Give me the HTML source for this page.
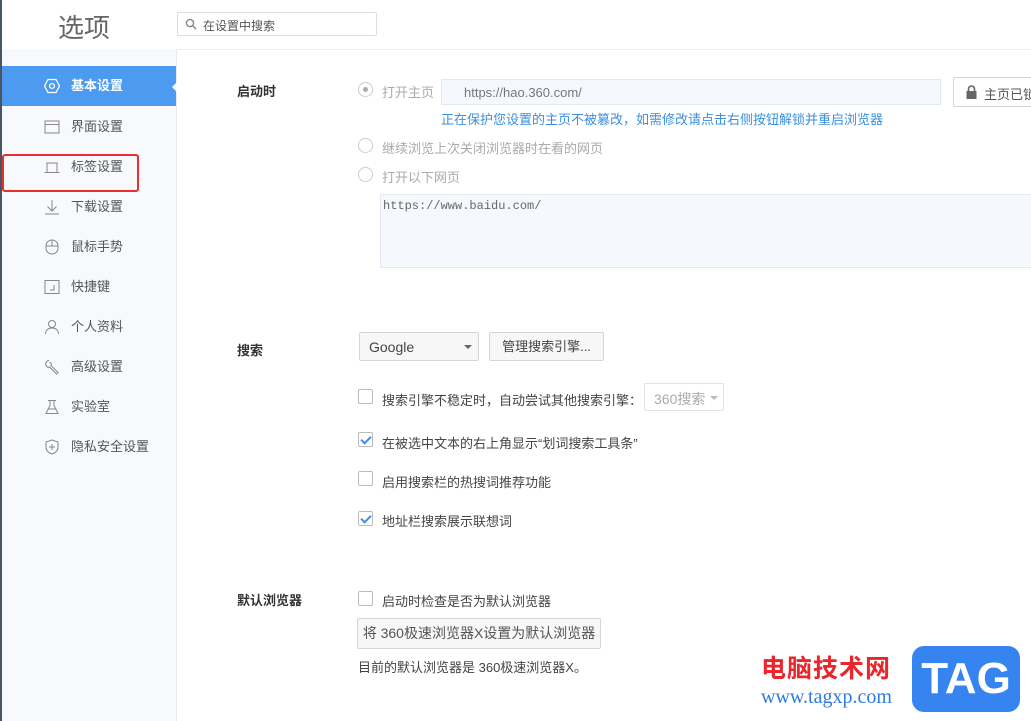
<!DOCTYPE html>
<html><head><meta charset="utf-8">
<style>
*{margin:0;padding:0;box-sizing:border-box}
body{width:1031px;height:721px;overflow:hidden;background:#fff;font-family:"Liberation Sans","Noto Sans CJK SC",sans-serif;font-size:13px;color:#444;position:relative}
.a{position:absolute}
.side{left:0;top:49px;width:177px;height:672px;background:#f7f9fc;border-right:1px solid #e6e9ee}
.item{position:absolute;left:0;width:176px;height:40px;line-height:40px;padding-left:71px;font-size:13px;color:#555}
.ic{position:absolute;left:44px;top:12px;width:16px;height:16px;color:#888;font-size:14px;line-height:16px;text-align:center}
.gray{color:#aaa}
.radio{position:absolute;width:15px;height:15px;border:1px solid #ccc;border-radius:50%;background:#fff}
.cb{position:absolute;width:15px;height:15px;border:1px solid #bbb;border-radius:2px;background:#fff}
.cb.on::after{content:"";position:absolute;left:4px;top:1px;width:4px;height:8px;border:solid #3b8ee8;border-width:0 2px 2px 0;transform:rotate(45deg)}
.btn{position:absolute;border:1px solid #d5d5d5;border-radius:2px;background:#f7f7f7;color:#444;text-align:center}
</style></head><body>
<div class="a" style="left:58px;top:8px;font-size:26px;color:#666">选项</div>
<div class="a" style="left:177px;top:12px;width:200px;height:24px;border:1px solid #ddd;border-radius:2px;background:#fff">
 <svg class="a" style="left:7px;top:5px" width="12" height="12" viewBox="0 0 12 12"><circle cx="5" cy="5" r="3.6" fill="none" stroke="#888" stroke-width="1.4"/><line x1="7.6" y1="7.6" x2="11" y2="11" stroke="#888" stroke-width="1.5"/></svg>
 <span class="a" style="left:25px;top:4px;font-size:12px;color:#555">在设置中搜索</span></div>
<div class="a" style="left:0;top:49px;width:1031px;height:1px;background:#eceef2"></div>
<div class="a side">
 <div class="item" style="top:17px;background:#4d9bf0;color:#fff;font-weight:bold"><span class="ic" style="color:#fff"><svg width="16" height="16" viewBox="0 0 16 16"><polygon points="4,1.5 12,1.5 15.5,8 12,14.5 4,14.5 0.5,8" fill="none" stroke="#fff" stroke-width="1.3"/><circle cx="8" cy="8" r="2.4" fill="none" stroke="#fff" stroke-width="1.3"/></svg></span>基本设置</div>
 <div class="a" style="left:172px;top:32px;width:0;height:0;border-top:6px solid transparent;border-bottom:6px solid transparent;border-right:6px solid #fff"></div>
 <div class="item" style="top:58px"><span class="ic"><svg width="16" height="16"><rect x="1" y="2" width="14" height="12" fill="none" stroke="#888"/><line x1="1" y1="5.5" x2="15" y2="5.5" stroke="#888"/></svg></span>界面设置</div>
 <div class="item" style="top:98px"><span class="ic"><svg width="16" height="16"><path d="M3 13V4h10v9M0.5 13.5h15" fill="none" stroke="#888"/></svg></span>标签设置</div>
 <div class="item" style="top:138px"><span class="ic"><svg width="16" height="16"><path d="M8 1v11M3.5 7.5L8 12l4.5-4.5M1 15h14" fill="none" stroke="#888"/></svg></span>下载设置</div>
 <div class="item" style="top:178px"><span class="ic"><svg width="16" height="16"><rect x="2" y="1" width="12" height="14" rx="6" fill="none" stroke="#888"/><line x1="2" y1="7" x2="14" y2="7" stroke="#888"/><line x1="8" y1="1" x2="8" y2="7" stroke="#888"/></svg></span>鼠标手势</div>
 <div class="item" style="top:218px"><span class="ic"><svg width="16" height="16"><rect x="1" y="1.5" width="14" height="13" fill="none" stroke="#888"/><path d="M10 6v5H6" fill="none" stroke="#888"/></svg></span>快捷键</div>
 <div class="item" style="top:258px"><span class="ic"><svg width="16" height="16"><circle cx="8" cy="5" r="3.5" fill="none" stroke="#888"/><path d="M1.5 15c0-4 3-6 6.5-6s6.5 2 6.5 6" fill="none" stroke="#888"/></svg></span>个人资料</div>
 <div class="item" style="top:298px"><span class="ic"><svg width="16" height="16"><path d="M5 1.5a3.5 3.5 0 0 0-3 5l2 2 1.5-.5 7 7 1.5-1.5-7-7 .5-1.5-2-2" fill="none" stroke="#888"/></svg></span>高级设置</div>
 <div class="item" style="top:338px"><span class="ic"><svg width="16" height="16"><path d="M4 1.5h8M6 1.5v5L2 14.5h12L10 6.5v-5M4.5 10h7" fill="none" stroke="#888"/></svg></span>实验室</div>
 <div class="item" style="top:378px"><span class="ic"><svg width="16" height="16"><path d="M8 1L2 3v5c0 4 3 6 6 7 3-1 6-3 6-7V3z" fill="none" stroke="#888"/><path d="M8 5v6M5 8h6" stroke="#888"/></svg></span>隐私安全设置</div>
</div>
<div class="a" style="left:0;top:0;width:2px;height:721px;background:#4a5562"></div>
<div class="a" style="left:2px;top:154px;width:137px;height:38px;border:2px solid #e8302c;border-radius:3px"></div>

<div class="a" style="left:237px;top:81px;font-weight:bold;color:#333">启动时</div>
<div class="radio" style="left:358px;top:82px"><div class="a" style="left:4px;top:4px;width:5px;height:5px;border-radius:50%;background:#aaa"></div></div>
<div class="a gray" style="left:382px;top:82px">打开主页</div>
<div class="a" style="left:441px;top:79px;width:500px;height:26px;background:#f5f9fd;border:1px solid #e3e8ee"><span class="a" style="left:22px;top:5px;color:#777;font-size:13px">https://hao.360.com/</span></div>
<div class="a" style="left:441px;top:109px;color:#3c8fdd;font-size:13px">正在保护您设置的主页不被篡改，如需修改请点击右侧按钮解锁并重启浏览器</div>
<div class="a" style="left:953px;top:77px;width:90px;height:30px;border:1px solid #d5d5d5;border-radius:2px;background:#fff">
 <svg class="a" style="left:12px;top:7px" width="11" height="14" viewBox="0 0 11 14"><path d="M2.5 6V4a3 3 0 0 1 6 0v2" fill="none" stroke="#666" stroke-width="1.6"/><rect x="0.5" y="6" width="10" height="8" fill="#666"/></svg>
 <span class="a" style="left:30px;top:6px;white-space:nowrap;color:#555">主页已锁定</span></div>
<div class="radio" style="left:358px;top:138px"></div>
<div class="a gray" style="left:382px;top:138px">继续浏览上次关闭浏览器时在看的网页</div>
<div class="radio" style="left:358px;top:167px"></div>
<div class="a gray" style="left:382px;top:167px">打开以下网页</div>
<div class="a" style="left:380px;top:194px;width:660px;height:74px;background:#f5f9fd;border:1px solid #e3e8ee"><span class="a" style="left:2px;top:4px;font-family:'Liberation Mono',monospace;font-size:12px;color:#666">https://www.baidu.com/</span></div>

<div class="a" style="left:237px;top:340px;font-weight:bold;color:#333">搜索</div>
<div class="btn" style="left:359px;top:332px;width:120px;height:29px;text-align:left;padding:6px 0 0 9px;font-size:14px">Google<span class="a" style="left:104px;top:12px;border-left:4px solid transparent;border-right:4px solid transparent;border-top:4px solid #666"></span></div>
<div class="btn" style="left:489px;top:332px;width:115px;height:29px;line-height:27px">管理搜索引擎...</div>
<div class="cb" style="left:358px;top:389px"></div>
<div class="a" style="left:382px;top:390px">搜索引擎不稳定时，自动尝试其他搜索引擎：</div>
<div class="a" style="left:644px;top:383px;width:80px;height:28px;border:1px solid #e2e2e2;border-radius:2px;color:#aaa;padding:5px 0 0 9px;font-size:14px">360搜索<span class="a" style="left:65px;top:12px;border-left:4px solid transparent;border-right:4px solid transparent;border-top:4px solid #bbb"></span></div>
<div class="cb on" style="left:358px;top:432px"></div>
<div class="a" style="left:382px;top:433px">在被选中文本的右上角显示“划词搜索工具条”</div>
<div class="cb" style="left:358px;top:471px"></div>
<div class="a" style="left:382px;top:472px">启用搜索栏的热搜词推荐功能</div>
<div class="cb on" style="left:358px;top:511px"></div>
<div class="a" style="left:382px;top:511px">地址栏搜索展示联想词</div>

<div class="a" style="left:237px;top:590px;font-weight:bold;color:#333">默认浏览器</div>
<div class="cb" style="left:358px;top:591px"></div>
<div class="a" style="left:382px;top:591px">启动时检查是否为默认浏览器</div>
<div class="btn" style="left:357px;top:618px;width:244px;height:31px;line-height:29px;font-size:14px;color:#555">将 360极速浏览器X设置为默认浏览器</div>
<div class="a" style="left:358px;top:657px">目前的默认浏览器是 360极速浏览器X。</div>

<div class="a" style="left:761px;top:649px;font-size:25px;font-weight:bold;color:#e9262b;letter-spacing:1px">电脑技术网</div>
<div class="a" style="left:761px;top:686px;font-family:'Liberation Serif',serif;font-size:20px;color:#2f7ae0">www.tagxp.com</div>
<div class="a" style="left:912px;top:646px;width:108px;height:66px;background:#3584f0;border-radius:12px;color:#fff;font-size:44px;font-weight:bold;text-align:center;line-height:66px">TAG</div>
</body></html>
